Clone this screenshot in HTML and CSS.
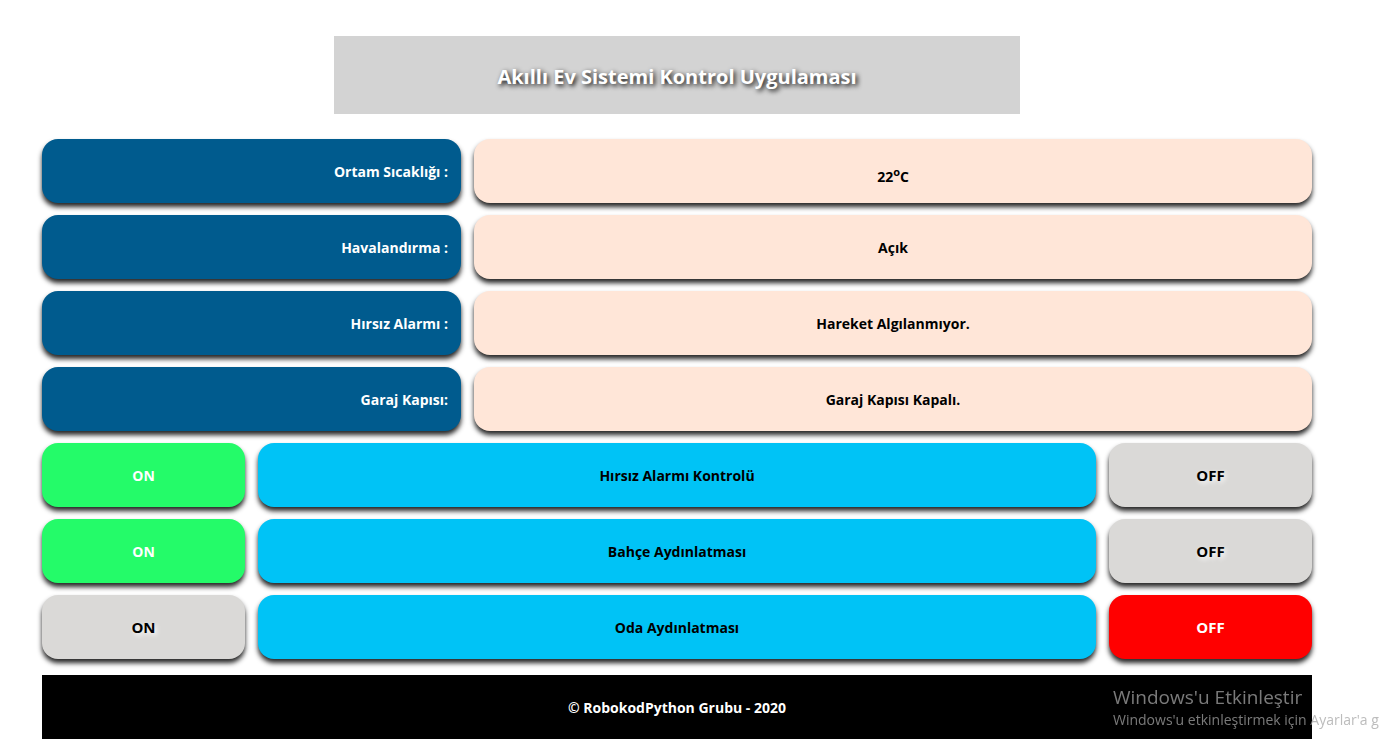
FILE: index.html
```html
<!DOCTYPE html>
<html lang="tr">
<head>
  <meta charset="utf-8">
  <title>Akıllı Ev Sistemi Kontrol Uygulaması</title>
  <link rel="stylesheet" href="styles.css">
</head>
<body>
  <div class="page">
    <header class="banner"><h1 class="banner-title">Akıllı Ev Sistemi Kontrol Uygulaması</h1></header>
    <main class="panel">
      <dl class="status-list">
        <div class="row status-row">
          <dt class="cell label">Ortam Sıcaklığı :</dt>
          <dd class="cell value temperature"><span>22<sup class="degree">o</sup>C</span></dd>
        </div>
        <div class="row status-row">
          <dt class="cell label">Havalandırma :</dt>
          <dd class="cell value">Açık</dd>
        </div>
        <div class="row status-row">
          <dt class="cell label">Hırsız Alarmı :</dt>
          <dd class="cell value">Hareket Algılanmıyor.</dd>
        </div>
        <div class="row status-row">
          <dt class="cell label">Garaj Kapısı:</dt>
          <dd class="cell value">Garaj Kapısı Kapalı.</dd>
        </div>
      </dl>
      <div class="row control-row" role="group" aria-labelledby="alarm">
        <button class="cell switch on" type="button" aria-pressed="true">ON</button>
        <div class="cell control-name" id="alarm">Hırsız Alarmı Kontrolü</div>
        <button class="cell switch idle" type="button" aria-pressed="false">OFF</button>
      </div>
      <div class="row control-row" role="group" aria-labelledby="garden">
        <button class="cell switch on" type="button" aria-pressed="true">ON</button>
        <div class="cell control-name" id="garden">Bahçe Aydınlatması</div>
        <button class="cell switch idle" type="button" aria-pressed="false">OFF</button>
      </div>
      <div class="row control-row" role="group" aria-labelledby="room">
        <button class="cell switch idle" type="button" aria-pressed="false">ON</button>
        <div class="cell control-name" id="room">Oda Aydınlatması</div>
        <button class="cell switch off" type="button" aria-pressed="true">OFF</button>
      </div>
    </main>
    <footer class="footer">© RobokodPython Grubu - 2020</footer>
  </div>
  <aside class="activation">
    <p class="activation-title">Windows'u Etkinleştir</p>
    <p class="activation-text">Windows'u etkinleştirmek için Ayarlar'a g</p>
  </aside>
</body>
</html>
```
FILE: styles.css
```css
* {
  box-sizing: border-box;
}

body {
  margin: 0;
  background: #fff;
  color: #000;
  font-family: "Open Sans", "Noto Sans", sans-serif;
  font-size: 14px;
  font-weight: 700;
  line-height: 20px;
}

.page {
  padding: 36px 72px 16px 42px;
}

.banner {
  display: flex;
  align-items: center;
  justify-content: center;
  width: 54%;
  margin: 0 auto 25px;
  padding: 26px 0 22px;
  background: #d3d3d3;
}

.banner-title {
  margin: 0;
  color: #fff;
  font-size: 20px;
  line-height: 30px;
  text-shadow: 2px 2px 5px #000;
}

.panel,
.status-list {
  display: grid;
  gap: 12px;
  margin: 0;
}

.row {
  display: grid;
  gap: 13px;
}

.status-row {
  grid-template-columns: 1fr 2fr;
}

.control-row {
  grid-template-columns: 203fr 838fr 203fr;
}

.cell {
  display: flex;
  align-items: center;
  justify-content: center;
  min-height: 64px;
  margin: 0;
  padding: 2px 13px 0;
  border: 0;
  border-radius: 16px;
  box-shadow: 0 4px 5px rgba(0, 0, 0, 0.85);
}

.label {
  justify-content: flex-end;
  background: #005b8e;
  color: #fff;
}

.value {
  background: #ffe6d8;
}

.temperature {
  padding-top: 12px;
}

.degree {
  font-size: 11px;
  line-height: 0;
}

.control-name {
  background: #00c3f6;
}

.switch {
  font: inherit;
  cursor: pointer;
}

.on {
  background: #24fb69;
  color: #fff;
}

.off,
.idle {
  padding-top: 0;
  font-size: 15px;
}

.off {
  background: #f00;
  color: #fff;
}

.idle {
  background: #dad9d7;
  color: #000;
  text-shadow: 2px 2px 5px #fff;
}

.footer {
  margin-top: 16px;
  padding: 23px 0 21px;
  background: #000;
  color: #fff;
  text-align: center;
}

.activation {
  position: fixed;
  right: 0;
  bottom: 26px;
  width: 271px;
  overflow: hidden;
  color: rgba(165, 165, 165, 0.74);
  font-weight: 400;
  white-space: nowrap;
  pointer-events: none;
}

.activation p {
  margin: 0;
}

.activation-title {
  font-size: 19px;
  line-height: 26px;
}

.activation-text {
  font-size: 14px;
  line-height: 20px;
}
```
